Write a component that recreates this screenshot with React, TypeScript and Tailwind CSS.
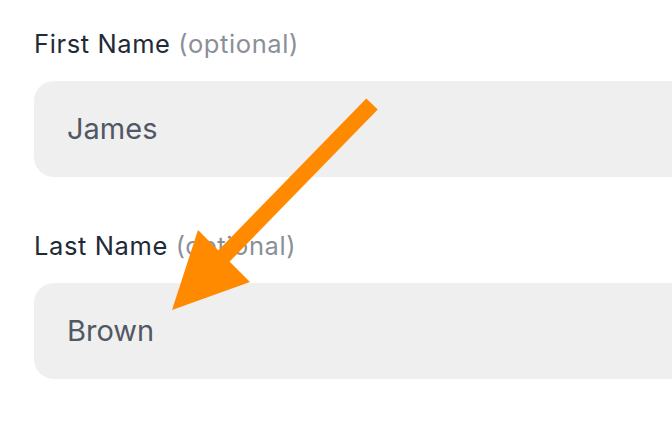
import React from "react";

export default function App() {
  return (
    <div
      className="relative w-[672px] h-[424px] overflow-hidden bg-white"
      style={{ fontFamily: "Inter, 'Noto Sans', sans-serif" }}
    >
      <div className="flex flex-col pl-[34px] pt-[28px] w-[760px]">
        <label className="text-[25.5px] leading-[32px] tracking-[0.6px] text-[#222a36]">
          First Name <span className="text-[#8b8f99]">(optional)</span>
        </label>
        <div className="mt-[21px] h-[96px] rounded-[20px] bg-[#efefef] flex items-center pl-[33px] text-[29px] text-[#525764]">
          James
        </div>
        <label className="mt-[53px] text-[25.5px] leading-[32px] tracking-[0.6px] text-[#222a36]">
          Last Name <span className="text-[#8b8f99]">(optional)</span>
        </label>
        <div className="mt-[21px] h-[96px] rounded-[20px] bg-[#efefef] flex items-center pl-[33px] text-[29px] text-[#525764]">
          Brown
        </div>
      </div>
      <svg
        className="absolute left-0 top-0 pointer-events-none"
        width="672"
        height="424"
        viewBox="0 0 672 424"
      >
        <line x1="372" y1="104" x2="222" y2="258" stroke="#ff8a00" strokeWidth="16" />
        <polygon points="172,310 198,230 250,282" fill="#ff8a00" />
      </svg>
    </div>
  );
}
